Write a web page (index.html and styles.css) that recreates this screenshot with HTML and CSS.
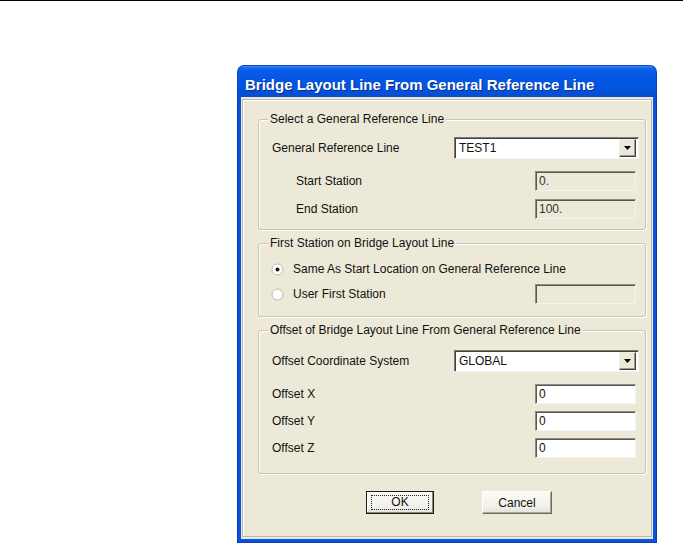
FILE: index.html
```
<!DOCTYPE html>
<html>
<head>
<meta charset="utf-8">
<link rel="stylesheet" href="styles.css">
</head>
<body>
<div class="topline"></div>
<div class="dialog">
  <div class="titlebar"><span class="title">Bridge Layout Line From General Reference Line</span></div>
  <div class="wrap">
    <div class="client">
      <div class="frame">
        <div class="group g1">
          <div class="legend">Select a General Reference Line</div>
          <div class="row row-dd">
            <span class="label">General Reference Line</span>
            <div class="combo"><span class="combo-text">TEST1</span><span class="combo-btn"><svg width="7" height="4" viewBox="0 0 7 4"><path d="M0 0H7L3.5 4Z" fill="#000"/></svg></span></div>
          </div>
          <div class="row row-start">
            <span class="label indent">Start Station</span>
            <div class="tb disabled">0.</div>
          </div>
          <div class="row row-end">
            <span class="label indent">End Station</span>
            <div class="tb disabled">100.</div>
          </div>
        </div>

        <div class="group g2">
          <div class="legend">First Station on Bridge Layout Line</div>
          <div class="row row-r1">
            <span class="radio-label"><svg class="radio" width="13" height="13" viewBox="0 0 13 13"><circle cx="6.5" cy="6.5" r="5.5" fill="#fff" stroke="#B9B6A8"/><circle cx="6.5" cy="6.5" r="2" fill="#1a1a1a"/></svg>Same As Start Location on General Reference Line</span>
          </div>
          <div class="row row-r2">
            <span class="radio-label"><svg class="radio" width="13" height="13" viewBox="0 0 13 13"><circle cx="6.5" cy="6.5" r="5.5" fill="#fff" stroke="#B9B6A8"/></svg>User First Station</span>
            <div class="tb disabled"></div>
          </div>
        </div>

        <div class="group g3">
          <div class="legend">Offset of Bridge Layout Line From General Reference Line</div>
          <div class="row row-dd2">
            <span class="label">Offset Coordinate System</span>
            <div class="combo"><span class="combo-text">GLOBAL</span><span class="combo-btn"><svg width="7" height="4" viewBox="0 0 7 4"><path d="M0 0H7L3.5 4Z" fill="#000"/></svg></span></div>
          </div>
          <div class="row row-x">
            <span class="label">Offset X</span>
            <div class="tb">0</div>
          </div>
          <div class="row row-y">
            <span class="label">Offset Y</span>
            <div class="tb">0</div>
          </div>
          <div class="row row-z">
            <span class="label">Offset Z</span>
            <div class="tb">0</div>
          </div>
        </div>

        <div class="buttons">
          <button class="btn btn-ok"><span class="focus">OK</span></button>
          <button class="btn btn-cancel">Cancel</button>
        </div>
      </div>
    </div>
  </div>
</div>
</body>
</html>
```
FILE: styles.css
```
* { box-sizing: border-box; }
html, body { margin: 0; background: #fff; }
body {
  font-family: "Liberation Sans", Arial, sans-serif;
  font-size: 12px;
  color: #111;
}
.topline { height: 1px; background: #000; }

.dialog {
  margin: 64px 0 0 237px;
  width: 420px;
  height: 478px;
  display: flex;
  flex-direction: column;
}
.titlebar {
  height: 32px;
  border-radius: 7px 7px 0 0;
  background: linear-gradient(to bottom, #3D8EF8 0, #1467EE 2px, #0A5CE6 5px, #0457E2 40%, #0253DC 80%, #0A4CCB 100%);
  padding: 10px 0 0 7px;
  border: 1px solid #0B45C8;
  border-bottom: 0;
}
.title {
  font-family: "Liberation Sans", Arial, sans-serif;
  font-weight: bold;
  font-size: 15px;
  line-height: 17px;
  color: #fff;
  text-shadow: 1px 1px 0 #0A2E8C;
}
.wrap {
  flex: 1;
  background: #0A52DE;
  padding: 0 3px 3px 3px;
  border-left: 1px solid #0B3BB5;
  border-right: 1px solid #0B3BB5;
  border-bottom: 1px solid #0B3BB5;
}
.client {
  height: 100%;
  background: #ECE9D8;
  padding: 2px 1px 2px 1px;
}
.frame {
  height: 100%;
  border: 1px solid #BDBAAB;
  box-shadow: inset 1px 1px 0 #fff;
  padding: 19px 5px 0 15px;
}

.group {
  border: 1px solid #C7C4B4;
  border-radius: 3px;
  box-shadow: 1px 1px 0 #fff, inset 1px 1px 0 #fff;
  padding: 0 6px 0 13px;
}
.legend {
  width: fit-content;
  margin: -8px 0 0 -4px;
  padding: 0 2px;
  background: #ECE9D8;
  line-height: 14px;
  height: 14px;
}
.g1 { padding-bottom: 10px; }
.g2 { margin-top: 13px; padding-bottom: 12px; }
.g3 { margin-top: 13px; padding-bottom: 15px; }

.row {
  display: flex;
  align-items: center;
  justify-content: space-between;
}
.label { line-height: 14px; }
.indent { margin-left: 24px; }

.row-dd { margin-top: 11px; }
.row-start { margin-top: 12px; }
.row-end { margin-top: 8px; }
.row-r1 { margin-top: 11px; height: 16px; }
.row-r2 { margin-top: 7px; }
.row-dd2 { margin-top: 13px; }
.row-x { margin-top: 12px; }
.row-y { margin-top: 7px; }
.row-z { margin-top: 7px; }

.combo {
  width: 185px;
  height: 22px;
  background: #fff;
  border-top: 1px solid #7F7D73;
  border-left: 1px solid #7F7D73;
  border-right: 1px solid #F4F3EE;
  border-bottom: 1px solid #F4F3EE;
  box-shadow: inset 1px 1px 0 #404040;
  display: flex;
  align-items: center;
  justify-content: space-between;
  padding: 1px 2px 1px 4px;
}
.combo-text { line-height: 14px; color: #111; }
.combo-btn {
  width: 17px;
  height: 18px;
  background: #ECE9D8;
  border-top: 1px solid #F0EFE8;
  border-left: 1px solid #F0EFE8;
  border-right: 1px solid #404040;
  border-bottom: 1px solid #404040;
  box-shadow: inset -1px -1px 0 #9C9A8E;
  display: flex;
  align-items: center;
  justify-content: center;
}

.tb {
  width: 101px;
  height: 20px;
  margin-right: 3px;
  background: #fff;
  border-top: 1px solid #8E8C82;
  border-left: 1px solid #8E8C82;
  border-right: 1px solid #F4F3EE;
  border-bottom: 1px solid #F4F3EE;
  box-shadow: inset 1px 1px 0 #5A5850;
  padding: 2px 0 0 3px;
  line-height: 14px;
  color: #111;
}
.tb.disabled {
  background: #ECE9D8;
  color: #333;
}

.radio-label {
  display: flex;
  align-items: center;
  line-height: 14px;
}
.radio { margin: 0 9px 0 -1px; flex: none; }

.buttons {
  display: flex;
  gap: 48px;
  margin: 17px 0 0 108px;
}
.btn {
  height: 23px;
  font-family: "Liberation Sans", Arial, sans-serif;
  font-size: 12px;
  color: #111;
  background: linear-gradient(to bottom, #FBFBF8, #F1F0EA 70%, #E4E2D8);
  padding: 0;
  display: flex;
  align-items: center;
  justify-content: center;
}
.btn-ok {
  width: 68px;
  border: 1px solid #1A1A1A;
  box-shadow: inset -1px -1px 0 #8A887E, inset 1px 1px 0 #fff;
}
.focus {
  display: block;
  width: 58px;
  height: 15px;
  line-height: 13px;
  border: 1px dotted #222;
}
.btn-cancel {
  width: 70px;
  border-top: 1px solid #fff;
  border-left: 1px solid #fff;
  border-right: 1px solid #6E6C64;
  border-bottom: 1px solid #6E6C64;
  box-shadow: inset -1px -1px 0 #ACA899;
}
```
